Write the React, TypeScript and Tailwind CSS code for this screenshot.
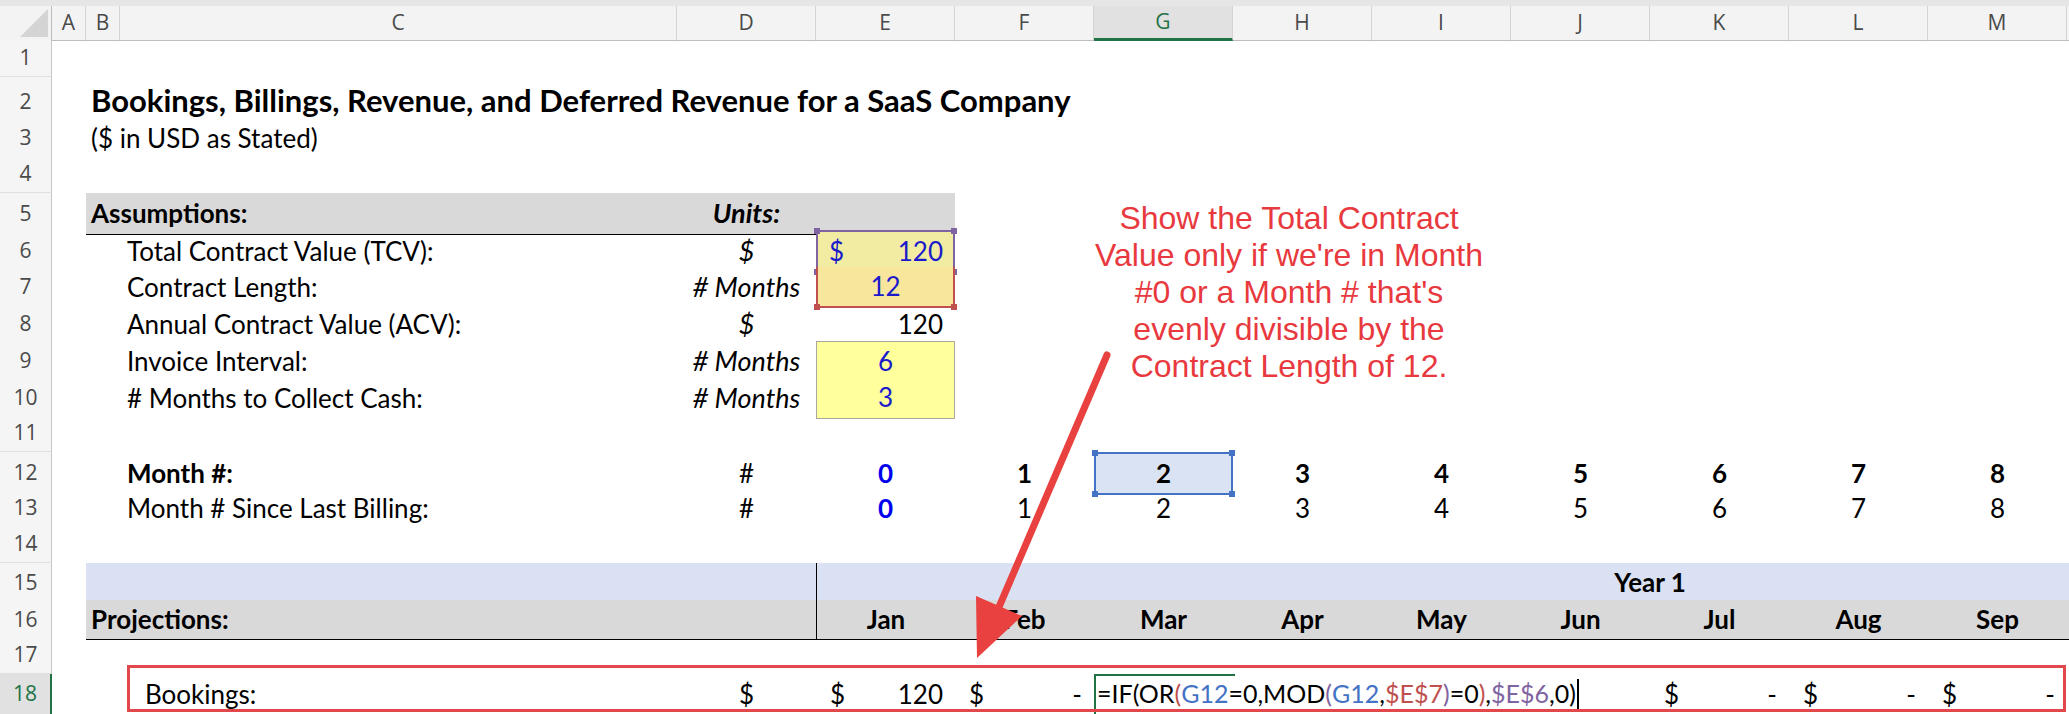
import React from "react";

// column template: row header, A, B, C, D..M, N (sliver)
const GRID = "grid grid-cols-[52px_34px_34px_557px_repeat(10,139px)_1fr]";
const LETTERS = ["A", "B", "C", "D", "E", "F", "G", "H", "I", "J", "K", "L", "M"];
const MONTHS = ["Jan", "Feb", "Mar", "Apr", "May", "Jun", "Jul", "Aug", "Sep"];

function RowHead({ n, active }: { n: number; active?: boolean }) {
  if (active) {
    return (
      <div className="flex items-center justify-center bg-[#e1e1e1] border-r-2 border-r-[#217346] text-[#217346] font-['Open_Sans',sans-serif] text-[21px]">
        {n}
      </div>
    );
  }
  return (
    <div className="flex items-center justify-center bg-[#f5f5f5] border-r border-r-[#c6c6c6] border-b border-b-[#e0e0e0] text-[#4a4a4a] font-['Open_Sans',sans-serif] text-[21px]">
      {n}
    </div>
  );
}

function Row({
  n,
  h = "h-[37px]",
  active,
  children,
}: {
  n: number;
  h?: string;
  active?: boolean;
  children?: React.ReactNode;
}) {
  return (
    <div className={`${GRID} ${h}`}>
      <RowHead n={n} active={active} />
      {children}
    </div>
  );
}

function Acct({ col, value }: { col: string; value: string }) {
  return (
    <div className={`${col} flex items-center justify-between pl-[14px] pr-[12px]`}>
      <span>$</span>
      <span>{value}</span>
    </div>
  );
}

export default function App() {
  return (
    <div className="relative w-[2069px] h-[714px] overflow-hidden bg-white text-black font-['Lato',sans-serif] text-[26px]">
      {/* column headers */}
      <div className={`${GRID} h-[40px] bg-[#f3f3f3] border-t-[6px] border-t-[#e6e6e6] font-['Open_Sans',sans-serif] text-[21px] text-[#4a4a4a]`}>
        <div className="border-r border-r-[#bdbdbd] border-b border-b-[#bdbdbd]">
          <svg width="52" height="33" viewBox="0 0 52 33">
            <polygon points="20,31 48,31 48,3" fill="#d4d4d4" />
          </svg>
        </div>
        {LETTERS.map((l) =>
          l === "G" ? (
            <div
              key={l}
              className="flex items-center justify-center bg-[#e1e1e1] text-[#217346] border-r border-r-[#d4d4d4] border-b-[3px] border-b-[#217346]"
            >
              {l}
            </div>
          ) : (
            <div
              key={l}
              className="flex items-center justify-center border-r border-r-[#d4d4d4] border-b border-b-[#bdbdbd]"
            >
              {l}
            </div>
          )
        )}
        <div className="border-b border-b-[#bdbdbd]" />
      </div>

      <Row n={1} />
      <Row n={2} h="h-[42px]">
        <div className="col-start-3 col-span-12 flex items-end pb-[3px] pl-[5px] font-bold text-[31px] whitespace-nowrap">
          Bookings, Billings, Revenue, and Deferred Revenue for a SaaS Company
        </div>
      </Row>
      <Row n={3}>
        <div className="col-start-3 col-span-12 flex items-center pl-[5px] whitespace-nowrap">
          ($ in USD as Stated)
        </div>
      </Row>
      <Row n={4} />
      <Row n={5}>
        <div className="col-start-3 col-span-2 flex items-center pl-[5px] bg-[#d9d9d9] border-b border-b-black font-bold">
          Assumptions:
        </div>
        <div className="col-start-5 flex items-center justify-center bg-[#d9d9d9] border-b border-b-black font-bold italic text-[27px]">
          Units:
        </div>
        <div className="col-start-6 bg-[#d9d9d9] border-b border-b-black" />
      </Row>

      <Row n={6}>
        <div className="col-start-4 flex items-center pl-[7px]">Total Contract Value (TCV):</div>
        <div className="col-start-5 flex items-center justify-center italic text-[27px]">$</div>
        <div className="col-start-6 relative flex items-center justify-between pl-[11px] pr-[10px] bg-[#f2eca2] border-2 border-[#8064a2] text-[#1a1acc]">
          <span>$</span>
          <span>120</span>
          <span className="absolute -left-[4px] -top-[4px] w-[6px] h-[6px] bg-[#8064a2]" />
          <span className="absolute -right-[4px] -top-[4px] w-[6px] h-[6px] bg-[#8064a2]" />
          <span className="absolute -left-[4px] -bottom-[4px] w-[6px] h-[6px] bg-[#8064a2]" />
          <span className="absolute -right-[4px] -bottom-[4px] w-[6px] h-[6px] bg-[#8064a2]" />
        </div>
      </Row>
      <Row n={7}>
        <div className="col-start-4 flex items-center pl-[7px]">Contract Length:</div>
        <div className="col-start-5 flex items-center justify-center italic text-[27px]"># Months</div>
        <div className="col-start-6 relative flex items-center justify-center bg-[#f8e69c] border-x-2 border-b-2 border-[#c0504d] text-[#1a1acc]">
          12
          <span className="absolute -left-[4px] -bottom-[4px] w-[6px] h-[6px] bg-[#c0504d]" />
          <span className="absolute -right-[4px] -bottom-[4px] w-[6px] h-[6px] bg-[#c0504d]" />
        </div>
      </Row>
      <Row n={8}>
        <div className="col-start-4 flex items-center pl-[7px]">Annual Contract Value (ACV):</div>
        <div className="col-start-5 flex items-center justify-center italic text-[27px]">$</div>
        <div className="col-start-6 flex items-center justify-end pr-[12px]">120</div>
      </Row>
      <Row n={9}>
        <div className="col-start-4 flex items-center pl-[7px]">Invoice Interval:</div>
        <div className="col-start-5 flex items-center justify-center italic text-[27px]"># Months</div>
        <div className="col-start-6 flex items-center justify-center bg-[#ffff9c] border border-[#a9a9a0] text-[#1a1acc]">
          6
        </div>
      </Row>
      <Row n={10}>
        <div className="col-start-4 flex items-center pl-[7px]"># Months to Collect Cash:</div>
        <div className="col-start-5 flex items-center justify-center italic text-[27px]"># Months</div>
        <div className="col-start-6 flex items-center justify-center bg-[#ffff9c] border border-t-0 border-[#a9a9a0] text-[#1a1acc]">
          3
        </div>
      </Row>
      <Row n={11} />

      <Row n={12}>
        <div className="col-start-4 flex items-center pl-[7px] font-bold">Month #:</div>
        <div className="col-start-5 flex items-center justify-center">#</div>
        <div className="col-start-6 flex items-center justify-center font-bold text-[#0000ee]">0</div>
        <div className="col-start-7 flex items-center justify-center font-bold">1</div>
        <div className="col-start-8 relative flex items-center justify-center font-bold bg-[#dae3f3] border-2 border-[#4472c4]">
          2
          <span className="absolute -left-[4px] -top-[4px] w-[6px] h-[6px] bg-[#4472c4]" />
          <span className="absolute -right-[4px] -top-[4px] w-[6px] h-[6px] bg-[#4472c4]" />
          <span className="absolute -left-[4px] -bottom-[4px] w-[6px] h-[6px] bg-[#4472c4]" />
          <span className="absolute -right-[4px] -bottom-[4px] w-[6px] h-[6px] bg-[#4472c4]" />
        </div>
        <div className="col-start-9 flex items-center justify-center font-bold">3</div>
        <div className="col-start-10 flex items-center justify-center font-bold">4</div>
        <div className="col-start-11 flex items-center justify-center font-bold">5</div>
        <div className="col-start-12 flex items-center justify-center font-bold">6</div>
        <div className="col-start-13 flex items-center justify-center font-bold">7</div>
        <div className="col-start-14 flex items-center justify-center font-bold">8</div>
      </Row>
      <Row n={13}>
        <div className="col-start-4 flex items-center pl-[7px]">Month # Since Last Billing:</div>
        <div className="col-start-5 flex items-center justify-center">#</div>
        <div className="col-start-6 flex items-center justify-center font-bold text-[#0000ee]">0</div>
        {[1, 2, 3, 4, 5, 6, 7, 8].map((v) => (
          <div key={v} className="flex items-center justify-center">
            {v}
          </div>
        ))}
      </Row>
      <Row n={14} />

      <Row n={15}>
        <div className="col-start-3 col-span-3 bg-[#d9e1f2] border-b border-b-[#505050]" />
        <div className="col-start-6 col-span-5 bg-[#d9e1f2] border-l border-l-black border-b border-b-[#505050]" />
        <div className="col-start-11 col-span-2 flex items-center justify-center bg-[#d9e1f2] border-b border-b-[#505050] font-bold">
          Year 1
        </div>
        <div className="col-start-13 col-span-3 bg-[#d9e1f2] border-b border-b-[#505050]" />
      </Row>
      <Row n={16}>
        <div className="col-start-3 col-span-3 flex items-center pl-[5px] bg-[#d9d9d9] border-b border-b-black font-bold">
          Projections:
        </div>
        {MONTHS.map((m, i) =>
          i === 0 ? (
            <div
              key={m}
              className="col-start-6 flex items-center justify-center bg-[#d9d9d9] border-l border-l-black border-b border-b-black font-bold"
            >
              {m}
            </div>
          ) : (
            <div
              key={m}
              className="flex items-center justify-center bg-[#d9d9d9] border-b border-b-black font-bold"
            >
              {m}
            </div>
          )
        )}
        <div className="bg-[#d9d9d9] border-b border-b-black" />
      </Row>
      <Row n={17} />

      <Row n={18} h="h-[40px]" active>
        <div className="col-start-4 flex items-center pl-[25px]">Bookings:</div>
        <div className="col-start-5 flex items-center justify-center">$</div>
        <Acct col="col-start-6" value="120" />
        <Acct col="col-start-7" value="-" />
        <div className="col-start-8 col-span-4 relative flex items-center pl-[1px] bg-white border-l-2 border-l-[#217346] whitespace-nowrap text-[25px]">
          <span className="absolute -left-[2px] top-0 w-[141px] h-[2px] bg-[#217346]" />
          <span>=IF(OR</span>
          <span className="text-[#c0504d]">(</span>
          <span className="text-[#4472c4]">G12</span>
          <span>=0,MOD</span>
          <span className="text-[#8064a2]">(</span>
          <span className="text-[#4472c4]">G12</span>
          <span>,</span>
          <span className="text-[#c0504d]">$E$7</span>
          <span className="text-[#8064a2]">)</span>
          <span>=0</span>
          <span className="text-[#c0504d]">)</span>
          <span>,</span>
          <span className="text-[#8064a2]">$E$6</span>
          <span>,0)</span>
          <span className="ml-[1px] w-[2px] h-[30px] bg-black" />
        </div>
        <Acct col="col-start-12" value="-" />
        <Acct col="col-start-13" value="-" />
        <Acct col="col-start-14" value="-" />
      </Row>

      {/* annotation overlay */}
      <div className="absolute left-[1079px] top-[200px] w-[420px] text-center text-[32px] leading-[37px] text-[#e8393e] font-['Liberation_Sans',Arial,sans-serif]">
        Show the Total Contract
        <br />
        Value only if we're in Month
        <br />
        #0 or a Month # that's
        <br />
        evenly divisible by the
        <br />
        Contract Length of 12.
      </div>
      <svg
        className="absolute left-0 top-0 pointer-events-none"
        width="2069"
        height="714"
        viewBox="0 0 2069 714"
      >
        <line x1="1107" y1="355" x2="999" y2="607" stroke="#e8413f" strokeWidth="7" strokeLinecap="round" />
        <polygon points="977,658 1022,616 976,596" fill="#e8413f" />
      </svg>
      <div className="absolute left-[127px] top-[665px] w-[1939px] h-[47px] border-[3px] border-[#e2474b] pointer-events-none" />
    </div>
  );
}
